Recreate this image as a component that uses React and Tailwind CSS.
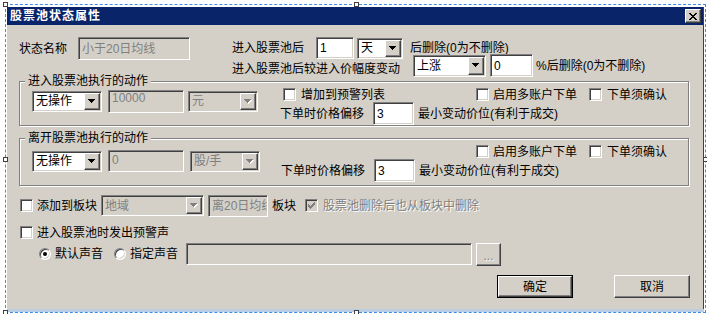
import React from "react";

const RAISED =
  "border border-t-white border-l-white border-b-[#404040] border-r-[#404040] shadow-[inset_-1px_-1px_0_#808080,inset_1px_1px_0_#d4d0c8] bg-[#d4d0c8]";
const SUNKEN =
  "border border-t-[#808080] border-l-[#808080] border-b-white border-r-white shadow-[inset_1px_1px_0_#404040,inset_-1px_-1px_0_#d4d0c8]";

function Arrow({ disabled }) {
  return (
    <svg width="8" height="5" viewBox="0 0 8 5" shapeRendering="crispEdges">
      {disabled && (
        <path d="M1 1H8V2H7V3H6V4H5V5H4V4H3V3H2V2H1Z" fill="#ffffff" />
      )}
      <path
        d="M0 0H7V1H6V2H5V3H4V4H3V3H2V2H1V1H0Z"
        fill={disabled ? "#808080" : "#000000"}
      />
    </svg>
  );
}

function Combo({ value, disabled, className }) {
  return (
    <div
      className={`flex items-stretch p-[1px] ${SUNKEN} ${
        disabled ? "bg-[#d4d0c8] text-[#808080]" : "bg-white text-black"
      } ${className}`}
    >
      <span className="flex-1 flex items-center pl-[2px] whitespace-nowrap overflow-hidden">
        {value}
      </span>
      <div className={`w-[16px] flex items-center justify-center ${RAISED}`}>
        <Arrow disabled={disabled} />
      </div>
    </div>
  );
}

function Edit({ value, disabled, className }) {
  return (
    <div
      className={`flex items-center pl-[3px] whitespace-nowrap overflow-hidden ${SUNKEN} ${
        disabled ? "bg-[#d4d0c8] text-[#808080]" : "bg-white text-black"
      } ${className}`}
    >
      {value}
    </div>
  );
}

function CheckMark({ color }) {
  const rows = [
    [6, 0, 1],
    [5, 1, 2],
    [0, 2, 1],
    [4, 2, 3],
    [0, 3, 2],
    [3, 3, 3],
    [0, 4, 5],
    [1, 5, 3],
    [2, 6, 1],
  ];
  return (
    <svg width="7" height="7" viewBox="0 0 7 7" shapeRendering="crispEdges">
      {rows.map(([x, y, w], i) => (
        <rect key={i} x={x} y={y} width={w} height="1" fill={color} />
      ))}
    </svg>
  );
}

function Check({ checked, disabled }) {
  return (
    <div
      className={`w-[13px] h-[13px] shrink-0 flex items-center justify-center ${SUNKEN} ${
        disabled ? "bg-[#d4d0c8]" : "bg-white"
      }`}
    >
      {checked && <CheckMark color={disabled ? "#808080" : "#000000"} />}
    </div>
  );
}

function Radio({ checked }) {
  return (
    <div className="w-[12px] h-[12px] shrink-0 rounded-full border border-t-[#808080] border-l-[#808080] border-b-white border-r-white shadow-[inset_1px_1px_0_#404040,inset_-1px_-1px_0_#d4d0c8] bg-white flex items-center justify-center">
      {checked && <div className="w-[4px] h-[4px] rounded-full bg-black" />}
    </div>
  );
}

function Group({ title, className, children }) {
  return (
    <div
      className={`relative border border-[#808080] shadow-[inset_1px_1px_0_#ffffff,1px_1px_0_#ffffff] ${className}`}
    >
      <span className="absolute left-[5px] top-[-8px] bg-[#d4d0c8] px-[3px] leading-[14px] whitespace-nowrap">
        {title}
      </span>
      {children}
    </div>
  );
}

function CloseGlyph() {
  const rows = [
    [0, 0, 2], [6, 0, 2],
    [1, 1, 2], [5, 1, 2],
    [2, 2, 4],
    [3, 3, 2],
    [2, 4, 4],
    [1, 5, 2], [5, 5, 2],
    [0, 6, 2], [6, 6, 2],
  ];
  return (
    <svg width="8" height="7" viewBox="0 0 8 7" shapeRendering="crispEdges">
      {rows.map(([x, y, w], i) => (
        <rect key={i} x={x} y={y} width={w} height="1" fill="#000" />
      ))}
    </svg>
  );
}

function Handle({ className }) {
  return (
    <div
      className={`absolute w-[5px] h-[5px] bg-white border border-[#404040] ${className}`}
    />
  );
}

export default function App() {
  return (
    <div className="relative w-[707px] h-[314px] bg-white overflow-hidden font-['Liberation_Sans','Noto_Sans_CJK_SC',sans-serif] text-[12px] leading-[14px] text-black">
      <div className="ml-[5px] mt-[4px] w-[701px] h-[309px] border border-dashed border-[#3c8ce6] pl-[1px] pt-[2px] flex flex-col">
        <div className="w-[697px] h-[302px] shrink-0 bg-[#d4d0c8] border-r border-[#404040] flex flex-col">
          {/* title bar */}
          <div className="h-[18px] shrink-0 bg-[#0a246a] flex items-center justify-between pl-[3px] pr-[2px]">
            <span className="text-white font-bold tracking-[1px] text-[12px]">
              股票池状态属性
            </span>
            <div className={`w-[16px] h-[14px] flex items-center justify-center ${RAISED}`}>
              <CloseGlyph />
            </div>
          </div>

          {/* body */}
          <div className="flex flex-col pl-[12px]">
            {/* section A */}
            <div className="mt-[12px] flex items-start">
              <div className="flex items-center h-[23px]">
                <span>状态名称</span>
                <Edit value="小于20日均线" disabled className="ml-[11px] w-[112px] h-[23px]" />
              </div>
              <div className="ml-[42px] flex flex-col">
                <div className="flex items-center h-[22px]">
                  <span>进入股票池后</span>
                  <Edit value="1" className="ml-[12px] w-[38px] h-[22px]" />
                  <Combo value="天" className="ml-[3px] w-[46px] h-[21px]" />
                  <span className="ml-[7px] whitespace-nowrap">后删除(0为不删除)</span>
                </div>
                <div className="flex items-center h-[23px] mt-[-5px]">
                  <span className="pt-[6px] whitespace-nowrap">进入股票池后较进入价幅度变动</span>
                  <Combo value="上涨" className="ml-[13px] w-[73px] h-[22px]" />
                  <Edit value="0" className="ml-[4px] w-[43px] h-[23px]" />
                  <span className="ml-[3px] whitespace-nowrap">%后删除(0为不删除)</span>
                </div>
              </div>
            </div>

            {/* group 1 */}
            <Group title="进入股票池执行的动作" className="mt-[4px] w-[670px] h-[45px]">
              <div className="flex items-start pl-[12px]">
                <div className="mt-[7px] flex items-center h-[24px]">
                  <Combo value="无操作" className="w-[70px] h-[21px]" />
                  <Edit value="10000" disabled className="ml-[6px] w-[76px] h-[23px] pb-[6px]" />
                  <Combo value="元" disabled className="ml-[4px] w-[70px] h-[21px]" />
                </div>
                <div className="ml-[22px] mt-[6px] flex flex-col">
                  <div className="flex h-[13px] pl-[3px]">
                    <div className="w-[193px] flex items-center">
                      <Check />
                      <span className="ml-[5px] whitespace-nowrap">增加到预警列表</span>
                    </div>
                    <div className="w-[113px] flex items-center">
                      <Check />
                      <span className="ml-[4px] whitespace-nowrap">启用多账户下单</span>
                    </div>
                    <div className="flex items-center">
                      <Check />
                      <span className="ml-[5px] whitespace-nowrap">下单须确认</span>
                    </div>
                  </div>
                  <div className="mt-[1px] flex items-center h-[23px]">
                    <span className="whitespace-nowrap">下单时价格偏移</span>
                    <Edit value="3" className="ml-[9px] w-[41px] h-[23px]" />
                    <span className="ml-[4px] whitespace-nowrap">最小变动价位(有利于成交)</span>
                  </div>
                </div>
              </div>
            </Group>

            {/* group 2 */}
            <Group title="离开股票池执行的动作" className="mt-[12px] w-[670px] h-[48px]">
              <div className="flex items-start pl-[12px]">
                <div className="mt-[11px] flex items-center h-[22px]">
                  <Combo value="无操作" className="w-[70px] h-[21px]" />
                  <Edit value="0" disabled className="ml-[6px] w-[76px] h-[22px] pb-[3px]" />
                  <Combo value="股/手" disabled className="ml-[6px] w-[70px] h-[21px]" />
                </div>
                <div className="ml-[21px] mt-[6px] flex flex-col">
                  <div className="flex h-[13px] ml-[195px]">
                    <div className="w-[113px] flex items-center">
                      <Check />
                      <span className="ml-[4px] whitespace-nowrap">启用多账户下单</span>
                    </div>
                    <div className="flex items-center">
                      <Check />
                      <span className="ml-[5px] whitespace-nowrap">下单须确认</span>
                    </div>
                  </div>
                  <div className="mt-[1px] flex items-center h-[23px]">
                    <span className="whitespace-nowrap">下单时价格偏移</span>
                    <Edit value="3" className="ml-[9px] w-[41px] h-[23px]" />
                    <span className="ml-[4px] whitespace-nowrap">最小变动价位(有利于成交)</span>
                  </div>
                </div>
              </div>
            </Group>

            {/* 板块 row */}
            <div className="mt-[9px] ml-[1px] flex items-center h-[21px]">
              <Check />
              <span className="ml-[4px] whitespace-nowrap">添加到板块</span>
              <Combo value="地域" disabled className="ml-[4px] w-[103px] h-[21px]" />
              <Edit value="离20日均线" disabled className="ml-[4px] w-[60px] h-[22px]" />
              <span className="ml-[4px] whitespace-nowrap">板块</span>
              <div className="ml-[9px]">
                <Check checked disabled />
              </div>
              <span className="ml-[5px] whitespace-nowrap text-[#808080] [text-shadow:1px_1px_0_#ffffff]">
                股票池删除后也从板块中删除
              </span>
            </div>

            {/* 预警声 row */}
            <div className="mt-[10px] ml-[1px] flex items-center h-[13px]">
              <Check />
              <span className="ml-[4px] whitespace-nowrap">进入股票池时发出预警声</span>
            </div>

            {/* radio row */}
            <div className="mt-[3px] ml-[20px] flex items-center h-[24px]">
              <Radio checked />
              <span className="ml-[4px] whitespace-nowrap">默认声音</span>
              <div className="ml-[11px]">
                <Radio />
              </div>
              <span className="ml-[4px] whitespace-nowrap">指定声音</span>
              <Edit value="" disabled className="ml-[8px] w-[286px] h-[22px]" />
              <div
                className={`ml-[4px] w-[25px] h-[23px] flex items-center justify-center text-[#808080] [text-shadow:1px_1px_0_#ffffff] ${RAISED}`}
              >
                <span className="pt-[3px]">...</span>
              </div>
            </div>

            {/* buttons */}
            <div className="mt-[9px] ml-[478px] flex items-center">
              <div className="w-[76px] h-[23px] border border-black">
                <div className={`w-full h-full flex items-center justify-center ${RAISED}`}>
                  确定
                </div>
              </div>
              <div
                className={`ml-[41px] w-[76px] h-[23px] flex items-center justify-center ${RAISED}`}
              >
                取消
              </div>
            </div>
          </div>
        </div>
        <div className="w-[697px] h-[3px] shrink-0 bg-[#b9cde5]" />
      </div>

      <Handle className="left-[3px] top-[2px]" />
      <Handle className="left-[354px] top-[2px]" />
      <Handle className="left-[3px] top-[157px]" />
      <Handle className="left-[703px] top-[157px]" />
      <Handle className="left-[3px] top-[310px]" />
      <Handle className="left-[354px] top-[310px]" />
    </div>
  );
}
